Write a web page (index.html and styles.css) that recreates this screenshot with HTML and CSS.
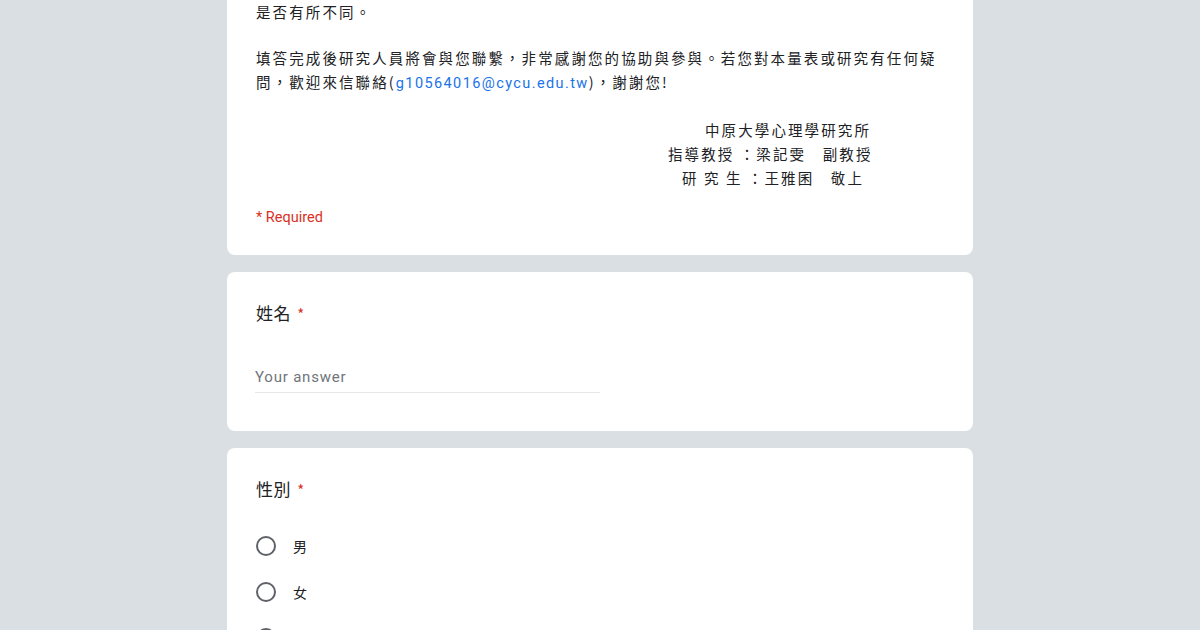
FILE: index.html
```html
<!DOCTYPE html>
<html lang="zh-Hant">
<head>
  <meta charset="UTF-8" />
  <meta name="viewport" content="width=device-width, initial-scale=1.0"/>
  <title>問卷</title>
  <link rel="stylesheet" href="styles.css">
</head>
<body>
  <div class="form-wrap">

    <!-- 說明卡片 -->
    <div class="card intro">
      <p class="desc">是否有所不同。</p>
      <p class="desc gap">填答完成後研究人員將會與您聯繫，非常感謝您的協助與參與。若您對本量表或研究有任何疑問，歡迎來信聯絡(<a href="#" class="mail">g10564016@cycu.edu.tw</a>)，謝謝您!</p>
      <div class="sign">
        <div class="sign-line l1">中原大學心理學研究所</div>
        <div class="sign-line">指導教授 ：梁記雯　副教授</div>
        <div class="sign-line l3">研 究 生 ：王雅囷　敬上</div>
      </div>
      <div class="required">* Required</div>
    </div>

    <!-- 姓名 -->
    <div class="card question">
      <div class="q-title">姓名 <span class="star">*</span></div>
      <div class="answer">
        <input type="text" placeholder="Your answer" />
      </div>
    </div>

    <!-- 性別 -->
    <div class="card question">
      <div class="q-title">性別 <span class="star">*</span></div>
      <div class="options">
        <label class="option"><span class="radio"></span><span>男</span></label>
        <label class="option"><span class="radio"></span><span>女</span></label>
        <label class="option"><span class="radio"></span><span>其他</span></label>
      </div>
    </div>

  </div>
</body>
</html>
```

FILE: styles.css
```css
body {
  margin: 0;
  background-color: #d9dfe3;
  font-family: "Noto Sans CJK TC", "Noto Sans", sans-serif;
  color: #202124;
}

.form-wrap {
  width: 746px;
  margin: -40px auto 0;
  display: flex;
  flex-direction: column;
  gap: 17px;
}

.card {
  background: #fff;
  border-radius: 8px;
  padding: 0 29px;
}

.intro {
  padding-top: 40px;
  padding-bottom: 25px;
}

.desc {
  margin: 0;
  font-size: 14.5px;
  line-height: 24px;
  letter-spacing: 2.1px;
}
.desc.gap {
  margin-top: 22px;
}

.mail {
  color: #1a73e8;
  text-decoration: none;
  font-family: Roboto, "Noto Sans", sans-serif;
  letter-spacing: 1.4px;
}

.sign {
  margin-top: 22px;
  padding-left: 412px;
  font-size: 14.5px;
  line-height: 24px;
  letter-spacing: 2.1px;
}
.sign-line {
  white-space: pre;
}
.sign-line.l1 {
  padding-left: 37px;
}
.sign-line.l3 {
  padding-left: 14px;
}

.required {
  margin-top: 16px;
  color: #d93025;
  font-family: Roboto, "Noto Sans", sans-serif;
  font-size: 14.5px;
  line-height: 24px;
}

/* 題目卡片 */
.question {
  padding-top: 28px;
  padding-bottom: 38px;
}

.q-title {
  font-size: 17px;
  line-height: 26px;
  letter-spacing: 0.5px;
}
.star {
  color: #d93025;
  font-size: 15px;
  margin-left: 2px;
}

.answer {
  margin-top: 36px;
}
.answer input {
  width: 345px;
  box-sizing: border-box;
  border: none;
  border-bottom: 1px solid #e4e6e8;
  padding: 0 0 6px 0;
  margin-left: -1px;
  font-family: Roboto, "Noto Sans", sans-serif;
  font-size: 15px;
  letter-spacing: 0.8px;
  color: #202124;
  outline: none;
  background: transparent;
}
.answer input::placeholder {
  color: #70757a;
}

.options {
  margin-top: 31px;
  display: flex;
  flex-direction: column;
  gap: 22px;
}
.option {
  display: flex;
  align-items: center;
  gap: 17px;
  font-size: 14px;
  height: 24px;
}
.radio {
  width: 20px;
  height: 20px;
  box-sizing: border-box;
  border: 2px solid #5f6368;
  border-radius: 50%;
}
```
